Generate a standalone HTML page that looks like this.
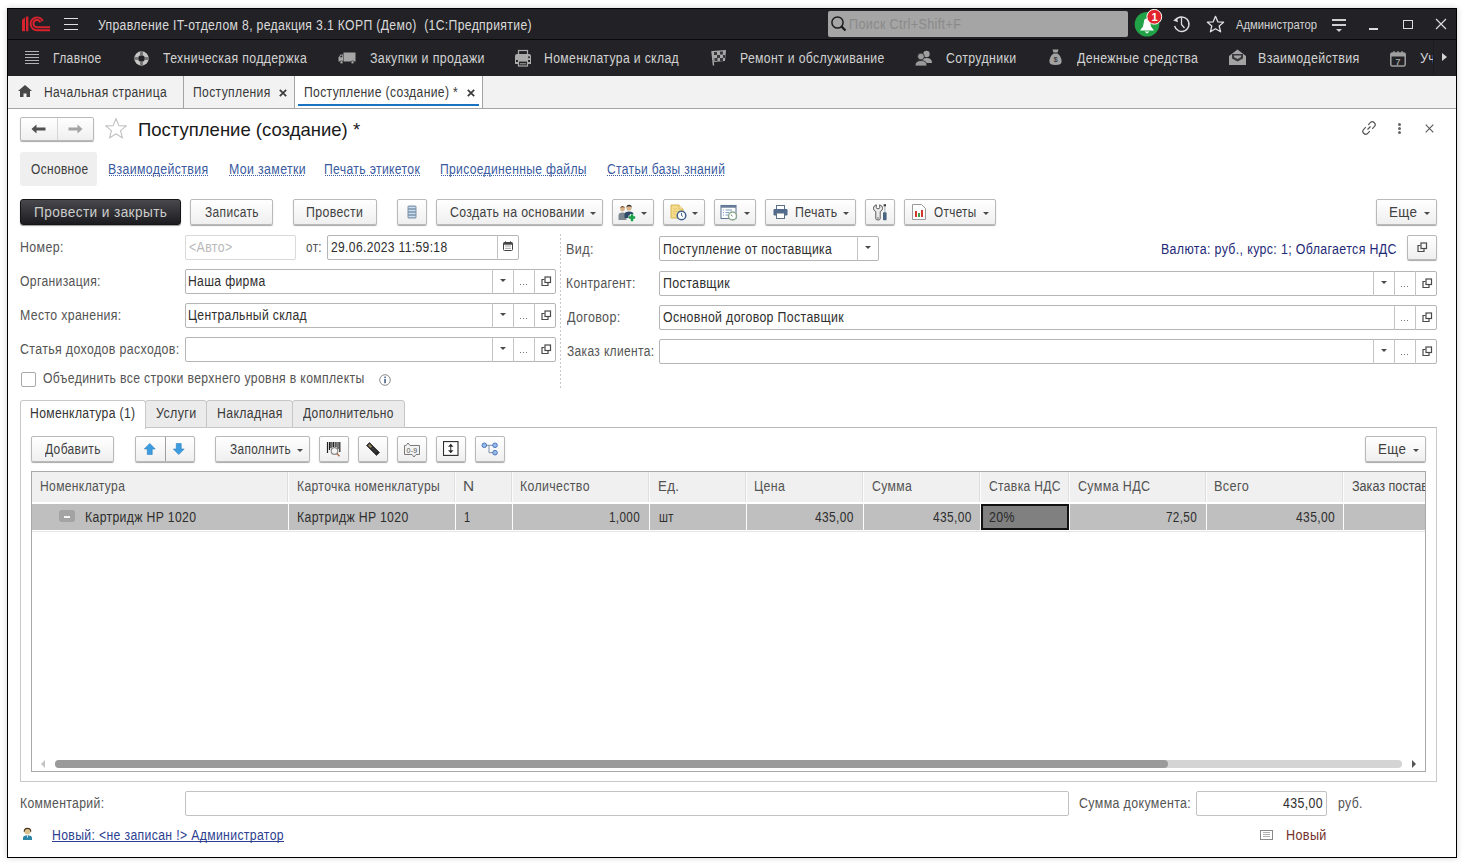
<!DOCTYPE html>
<html><head><meta charset="utf-8">
<style>
*{box-sizing:border-box;margin:0;padding:0}
html,body{width:1464px;height:865px;overflow:hidden;background:#fff;font-family:"Liberation Sans",sans-serif;position:relative}
.a{position:absolute;white-space:nowrap}
.btn{position:absolute;height:26px;border:1px solid #b9b9b9;border-radius:2px;background:linear-gradient(#fff,#efefef);box-shadow:0 1px 1px #a9a9a9}
.inp{position:absolute;height:25px;border:1px solid #b5b5b5;border-radius:2px;background:#fff}
.caret{position:absolute;width:0;height:0;border-left:3px solid transparent;border-right:3px solid transparent;border-top:3px solid #4a4a4a}
.dl{position:absolute;height:1px;background-image:linear-gradient(to right,#3d5ea5 50%,transparent 50%);background-size:2px 1px}
</style></head><body>
<div class="a" style="left:7px;top:8px;width:1450px;height:850px;border:1px solid #000;box-shadow:0 0 6px rgba(0,0,0,.18)"></div>
<div class="a" style="left:8px;top:9px;width:1448px;height:30px;background:#222226"></div>
<div class="a" style="left:8px;top:39px;width:1448px;height:1px;background:#0a0a0b"></div>
<div class="a" style="left:8px;top:40px;width:1448px;height:36px;background:#232327"></div>
<div class="a" style="left:8px;top:76px;width:1448px;height:33px;background:#f2f2f2;border-bottom:1px solid #a5a5a5"></div>
<svg class="a" style="left:16px;top:12px" width="36" height="22" viewBox="0 0 36 22">
 <path d="M6 8 L9 5.3 V19.2 H6 Z M10 4.4 H12.4 V19.2 H10 Z" fill="#d8222e"/>
 <g fill="none" stroke="#d8222e" stroke-width="2">
  <path d="M26.8 9.1 A6.4 6.4 0 1 0 21 18.2 H34"/>
  <path d="M24.4 10.4 A3.6 3.6 0 1 0 21 15.2 H34"/>
 </g></svg>
<div class="a" style="left:64px;top:18px;width:14px;height:1px;background:#e0e0e0"></div>
<div class="a" style="left:64px;top:24px;width:14px;height:1px;background:#e0e0e0"></div>
<div class="a" style="left:64px;top:29px;width:14px;height:1px;background:#e0e0e0"></div>
<div class="a" style="left:98.00px;top:17px;font-size:14px;line-height:16px;color:#dadada;letter-spacing:0.4px;transform:scaleX(0.8708);transform-origin:0 0;">Управление IT-отделом 8, редакция 3.1 КОРП (Демо)&nbsp; (1С:Предприятие)</div>
<div class="a" style="left:828px;top:11px;width:300px;height:26px;background:#a5a5a5;border-radius:2px"></div>
<svg class="a" style="left:830px;top:15px" width="18" height="18" viewBox="0 0 18 18"><circle cx="7.5" cy="7.5" r="5.6" fill="none" stroke="#1d1d1d" stroke-width="1.5"/><path d="M11.6 11.6 L15.5 15.5" stroke="#1d1d1d" stroke-width="2.2"/></svg>
<div class="a" style="left:848.60px;top:16px;font-size:14px;line-height:16px;color:#8a8a8a;letter-spacing:0.4px;transform:scaleX(0.9011);transform-origin:0 0;">Поиск Ctrl+Shift+F</div>
<svg class="a" style="left:1133px;top:9px" width="30" height="30" viewBox="0 0 30 30">
 <circle cx="14" cy="15.2" r="12.3" fill="#22a246"/>
 <path d="M7 21.5 L21 21.5 L18 17.5 L17 12.5 A3 3 0 0 0 11 12.5 L10 17.5 Z" fill="#fff"/>
 <path d="M11.5 22.5 H16.5 L14 24.5 Z" fill="#fff"/>
 <circle cx="21.3" cy="7.8" r="7.4" fill="#e3232b" stroke="#fff" stroke-width="1"/>
 <text x="21.5" y="11.8" font-family="Liberation Sans" font-size="11" font-weight="bold" fill="#fff" text-anchor="middle">1</text>
</svg>
<svg class="a" style="left:1171px;top:14px" width="21" height="21" viewBox="0 0 21 21"><path d="M4.6 6.2 A7.3 7.3 0 1 1 3.6 12" fill="none" stroke="#dedede" stroke-width="1.4"/><path d="M2.2 6.5 L7 8.3 L6 3.5 Z" fill="#dedede"/><path d="M10.5 3.5 V10.4 L13.5 14" fill="none" stroke="#dedede" stroke-width="1.3"/></svg>
<svg class="a" style="left:1206px;top:15px" width="19" height="19" viewBox="0 0 19 19"><path d="M9.5 1.3 L11.8 6.8 L17.6 7.2 L13.2 11 L14.6 16.8 L9.5 13.7 L4.4 16.8 L5.8 11 L1.4 7.2 L7.2 6.8 Z" fill="none" stroke="#dedede" stroke-width="1.3" stroke-linejoin="round"/></svg>
<div class="a" style="left:1236.30px;top:18px;font-size:12px;line-height:14px;color:#d2d2d2;transform:scaleX(0.9367);transform-origin:0 0;">Администратор</div>
<div class="a" style="left:1332px;top:19px;width:14px;height:1.5px;background:#d0d0d0"></div>
<div class="a" style="left:1332px;top:24px;width:14px;height:1.5px;background:#d0d0d0"></div>
<div class="a" style="left:1336px;top:29px;width:0;height:0;border-left:3.5px solid transparent;border-right:3.5px solid transparent;border-top:3px solid #d0d0d0"></div>
<div class="a" style="left:1369px;top:28px;width:9px;height:1.5px;background:#dcdcdc"></div>
<div class="a" style="left:1403px;top:20px;width:10px;height:9px;border:1.3px solid #dcdcdc"></div>
<svg class="a" style="left:1435px;top:18px" width="12" height="12" viewBox="0 0 12 12"><path d="M1 1 L11 11 M11 1 L1 11" stroke="#dcdcdc" stroke-width="1.2"/></svg>
<div class="a" style="left:25px;top:51px;width:14px;height:13px;background:repeating-linear-gradient(#b4b4b4 0 1px,transparent 1px 3px)"></div>
<div class="a" style="left:52.94px;top:50px;font-size:14px;line-height:16px;color:#d2d2d2;letter-spacing:0.4px;transform:scaleX(0.8620);transform-origin:0 0;">Главное</div>
<svg class="a" style="left:134px;top:51px" width="15" height="15" viewBox="0 0 15 15"><circle cx="7.5" cy="7.5" r="7.2" fill="#c6c6c6"/><circle cx="7.5" cy="7.5" r="3.3" fill="#232327"/><rect x="6" y="0" width="3" height="4.2" fill="#777"/><rect x="6" y="10.8" width="3" height="4.2" fill="#777"/><rect x="0" y="6" width="4.2" height="3" fill="#777"/><rect x="10.8" y="6" width="4.2" height="3" fill="#777"/></svg>
<div class="a" style="left:163.30px;top:50px;font-size:14px;line-height:16px;color:#d2d2d2;letter-spacing:0.4px;transform:scaleX(0.8769);transform-origin:0 0;">Техническая поддержка</div>
<svg class="a" style="left:338px;top:52px" width="18" height="12" viewBox="0 0 18 12"><path d="M5.5 0.5 H17.5 V9.5 H5.5 Z" fill="#a6a6a6"/><path d="M5 2.5 H2.5 L0.5 5.5 V9.5 H5 Z" fill="#a6a6a6"/><path d="M1.8 5.2 L3 3.5 H4.2 V5.2 Z" fill="#232327"/><circle cx="3.5" cy="10.2" r="1.5" fill="#a6a6a6" stroke="#232327" stroke-width="0.6"/><circle cx="14.5" cy="10.2" r="1.5" fill="#a6a6a6" stroke="#232327" stroke-width="0.6"/></svg>
<div class="a" style="left:369.50px;top:50px;font-size:14px;line-height:16px;color:#d2d2d2;letter-spacing:0.4px;transform:scaleX(0.8876);transform-origin:0 0;">Закупки и продажи</div>
<svg class="a" style="left:514px;top:49px" width="18" height="18" viewBox="0 0 18 18"><rect x="4.5" y="1.5" width="9" height="5" fill="none" stroke="#ababab" stroke-width="1.2"/><path d="M1 7 Q1 5 3 5 H15 Q17 5 17 7 V15 H1 Z" fill="#ababab"/><rect x="2" y="11" width="2" height="2" fill="#232327"/><rect x="14" y="11" width="2" height="2" fill="#232327"/><circle cx="15" cy="8.3" r="1" fill="#232327"/><rect x="4.5" y="12" width="9" height="5" fill="#232327" stroke="#ababab" stroke-width="1.2"/><path d="M6 14.8 H12" stroke="#ababab" stroke-width="1"/></svg>
<div class="a" style="left:544.43px;top:50px;font-size:14px;line-height:16px;color:#d2d2d2;letter-spacing:0.4px;transform:scaleX(0.8710);transform-origin:0 0;">Номенклатура и склад</div>
<svg class="a" style="left:711px;top:49px" width="16" height="17" viewBox="0 0 16 17"><path d="M1 2 L15 1 L14 12 L3 13 Z" fill="#a8a8a8"/><path d="M3 3 h3 v3 h-3z M9 2.5 h3 v3 h-3z M6 6 h3 v3 h-3z M3.5 9 h3 v3 h-3z M12 6 h2 v3 h-2z M9 9 h3 v3 h-3z" fill="#3a3a3e"/><path d="M1 2 L2.5 16.5" stroke="#a8a8a8" stroke-width="1.5"/></svg>
<div class="a" style="left:740.13px;top:50px;font-size:14px;line-height:16px;color:#d2d2d2;letter-spacing:0.4px;transform:scaleX(0.8727);transform-origin:0 0;">Ремонт и обслуживание</div>
<svg class="a" style="left:915px;top:50px" width="17" height="16" viewBox="0 0 17 16"><circle cx="11.5" cy="4" r="3.2" fill="#a0a0a0"/><path d="M6 13 Q6 8 11.5 8 Q17 8 17 13 Z" fill="#a0a0a0"/><circle cx="6" cy="6.5" r="3.4" fill="#9a9a9a" stroke="#232327" stroke-width="0.8"/><path d="M0 16 Q0 10.5 6 10.5 Q12 10.5 12 16 Z" fill="#9a9a9a" stroke="#232327" stroke-width="0.8"/></svg>
<div class="a" style="left:946.00px;top:50px;font-size:14px;line-height:16px;color:#d2d2d2;letter-spacing:0.4px;transform:scaleX(0.8828);transform-origin:0 0;">Сотрудники</div>
<svg class="a" style="left:1049px;top:49px" width="13" height="16" viewBox="0 0 13 16"><path d="M3.5 0.5 H9.5 L8.5 3.5 H4.5 Z" fill="#a3a3a3"/><path d="M4.5 4.5 H8.5 Q13 8 12.5 13 Q12.5 16 6.5 16 Q0.5 16 0.5 13 Q0 8 4.5 4.5 Z" fill="#a3a3a3"/><text x="6.5" y="13.3" font-size="7.5" fill="#232327" text-anchor="middle" font-family="Liberation Sans">$</text></svg>
<div class="a" style="left:1076.50px;top:50px;font-size:14px;line-height:16px;color:#d2d2d2;letter-spacing:0.4px;transform:scaleX(0.8833);transform-origin:0 0;">Денежные средства</div>
<svg class="a" style="left:1229px;top:49px" width="17" height="16" viewBox="0 0 17 16"><path d="M0 7 L8.5 0.5 L17 7 V16 H0 Z" fill="#a3a3a3"/><path d="M3 5 H14 V9.5 L8.5 12.5 L3 9.5 Z" fill="#3b3b3f"/><path d="M5 6.5 H12 V8 L8.5 10 L5 8 Z" fill="#a3a3a3"/></svg>
<div class="a" style="left:1257.81px;top:50px;font-size:14px;line-height:16px;color:#d2d2d2;letter-spacing:0.4px;transform:scaleX(0.8902);transform-origin:0 0;">Взаимодействия</div>
<svg class="a" style="left:1390px;top:50px" width="16" height="17" viewBox="0 0 16 17"><rect x="0.8" y="3" width="14.4" height="13" rx="1.5" fill="none" stroke="#a0a0a0" stroke-width="1.5"/><rect x="0.8" y="3" width="14.4" height="3.5" fill="#a0a0a0"/><path d="M4 1 V4 M8 1 V4 M12 1 V4" stroke="#a0a0a0" stroke-width="1.2"/><text x="8" y="14.8" font-size="9" font-weight="bold" fill="#a0a0a0" text-anchor="middle" font-family="Liberation Sans">7</text></svg>
<div class="a" style="left:1420px;top:40px;width:13px;height:36px;overflow:hidden"><div class="a" style="left:0;top:10px;font-size:14px;line-height:16px;color:#d2d2d2;transform:scaleX(0.92);transform-origin:0 0">Учет</div></div>
<div class="a" style="left:1433px;top:40px;width:1px;height:36px;background:#1d1d20"></div>
<div class="a" style="left:1442px;top:53px;width:0;height:0;border-top:4.5px solid transparent;border-bottom:4.5px solid transparent;border-left:5.5px solid #d4d4d4"></div>
<svg class="a" style="left:18px;top:85px" width="14" height="12" viewBox="0 0 14 12"><path d="M7 0 L14 6 H12 V12 H8.5 V8.5 H5.5 V12 H2 V6 H0 Z" fill="#474747"/></svg>
<div class="a" style="left:43.54px;top:84px;font-size:14px;line-height:16px;color:#383838;letter-spacing:0.4px;transform:scaleX(0.8623);transform-origin:0 0;">Начальная страница</div>
<div class="a" style="left:183px;top:76px;width:1px;height:32px;background:#a3a3a3"></div>
<div class="a" style="left:193.43px;top:84px;font-size:14px;line-height:16px;color:#383838;letter-spacing:0.4px;transform:scaleX(0.8674);transform-origin:0 0;">Поступления</div>
<svg class="a" style="left:279px;top:89px" width="8" height="8" viewBox="0 0 8 8"><path d="M0.8 0.8 L7.2 7.2 M7.2 0.8 L0.8 7.2" stroke="#3a3a3a" stroke-width="1.7"/></svg>
<div class="a" style="left:294px;top:76px;width:1px;height:32px;background:#a3a3a3"></div>
<div class="a" style="left:295px;top:76px;width:187px;height:32px;background:#fff"></div>
<div class="a" style="left:304.13px;top:84px;font-size:14px;line-height:16px;color:#383838;letter-spacing:0.4px;transform:scaleX(0.8677);transform-origin:0 0;">Поступление (создание) *</div>
<svg class="a" style="left:467px;top:89px" width="8" height="8" viewBox="0 0 8 8"><path d="M0.8 0.8 L7.2 7.2 M7.2 0.8 L0.8 7.2" stroke="#3a3a3a" stroke-width="1.7"/></svg>
<div class="a" style="left:298px;top:104px;width:181px;height:2px;background:#1a73c0"></div>
<div class="a" style="left:482px;top:76px;width:1px;height:32px;background:#a3a3a3"></div>
<div class="btn" style="left:20px;top:117px;width:74px;height:24px"></div>
<div class="a" style="left:57px;top:118px;width:1px;height:22px;background:#d5d5d5"></div>
<svg class="a" style="left:31px;top:124px" width="16" height="10" viewBox="0 0 16 10"><path d="M0.5 5 L5.5 0.5 V3.5 H14.5 V6.5 H5.5 V9.5 Z" fill="#505050"/></svg>
<svg class="a" style="left:67px;top:124px" width="16" height="10" viewBox="0 0 16 10"><path d="M15.5 5 L10.5 0.5 V3.5 H1.5 V6.5 H10.5 V9.5 Z" fill="#a3a3a3"/></svg>
<svg class="a" style="left:104px;top:117px" width="24" height="23" viewBox="0 0 24 23"><path d="M12 1.5 L14.8 8.6 L22.4 8.9 L16.5 13.6 L18.5 21 L12 16.8 L5.5 21 L7.5 13.6 L1.6 8.9 L9.2 8.6 Z" fill="none" stroke="#c2c2c2" stroke-width="1.1" stroke-linejoin="round"/></svg>
<div class="a" style="left:137.63px;top:119px;font-size:19px;line-height:22px;color:#1a1a1a;transform:scaleX(0.9739);transform-origin:0 0;">Поступление (создание) *</div>
<svg class="a" style="left:1361px;top:120px" width="16" height="16" viewBox="0 0 16 16"><path d="M6.5 9.5 L9.5 6.5" stroke="#555" stroke-width="1.2"/><path d="M7.2 4.8 L9.3 2.7 A2.6 2.6 0 0 1 13.3 6.7 L11.2 8.8 M4.8 7.2 L2.7 9.3 A2.6 2.6 0 0 0 6.7 13.3 L8.8 11.2" fill="none" stroke="#555" stroke-width="1.2"/></svg>
<div class="a" style="left:1398px;top:123px;width:3px;height:3px;border-radius:2px;background:#666"></div>
<div class="a" style="left:1398px;top:127px;width:3px;height:3px;border-radius:2px;background:#666"></div>
<div class="a" style="left:1398px;top:131px;width:3px;height:3px;border-radius:2px;background:#666"></div>
<svg class="a" style="left:1425px;top:124px" width="9" height="9" viewBox="0 0 9 9"><path d="M0.7 0.7 L8.3 8.3 M8.3 0.7 L0.7 8.3" stroke="#555" stroke-width="1.1"/></svg>
<div class="a" style="left:20px;top:152px;width:77px;height:34px;background:#efefef;border-radius:3px"></div>
<div class="a" style="left:30.70px;top:161px;font-size:14px;line-height:16px;color:#3c3c3c;letter-spacing:0.4px;transform:scaleX(0.8546);transform-origin:0 0;">Основное</div>
<div class="a" style="left:108.42px;top:161px;font-size:14px;line-height:16px;color:#3a5aa0;letter-spacing:0.4px;transform:scaleX(0.8804);transform-origin:0 0;">Взаимодействия</div>
<div class="dl" style="left:109px;top:175px;width:99px"></div>
<div class="a" style="left:228.52px;top:161px;font-size:14px;line-height:16px;color:#3a5aa0;letter-spacing:0.4px;transform:scaleX(0.8823);transform-origin:0 0;">Мои заметки</div>
<div class="dl" style="left:229px;top:175px;width:75px"></div>
<div class="a" style="left:324.43px;top:161px;font-size:14px;line-height:16px;color:#3a5aa0;letter-spacing:0.4px;transform:scaleX(0.8695);transform-origin:0 0;">Печать этикеток</div>
<div class="dl" style="left:325px;top:175px;width:96px"></div>
<div class="a" style="left:440.14px;top:161px;font-size:14px;line-height:16px;color:#3a5aa0;letter-spacing:0.4px;transform:scaleX(0.8631);transform-origin:0 0;">Присоединенные файлы</div>
<div class="dl" style="left:441px;top:175px;width:146px"></div>
<div class="a" style="left:607.00px;top:161px;font-size:14px;line-height:16px;color:#3a5aa0;letter-spacing:0.4px;transform:scaleX(0.8602);transform-origin:0 0;">Статьи базы знаний</div>
<div class="dl" style="left:607px;top:175px;width:118px"></div>
<div class="a" style="left:20px;top:199px;width:161px;height:26px;border-radius:3px;background:linear-gradient(#48484d,#1c1c20);border:1px solid #151517;box-shadow:0 1px 1px #999"></div>
<div class="a" style="left:33.72px;top:204px;font-size:14px;line-height:16px;color:#cdcdcd;letter-spacing:0.4px;transform:scaleX(0.9761);transform-origin:0 0;">Провести и закрыть</div>
<div class="btn" style="left:190px;top:199px;width:83px"></div>
<div class="a" style="left:204.90px;top:204px;font-size:14px;line-height:16px;color:#404040;letter-spacing:0.4px;transform:scaleX(0.8551);transform-origin:0 0;">Записать</div>
<div class="btn" style="left:293px;top:199px;width:84px"></div>
<div class="a" style="left:306.12px;top:204px;font-size:14px;line-height:16px;color:#404040;letter-spacing:0.4px;transform:scaleX(0.8806);transform-origin:0 0;">Провести</div>
<div class="btn" style="left:397px;top:199px;width:30px"></div>
<svg class="a" style="left:407px;top:205px" width="10" height="14" viewBox="0 0 10 14"><rect x="0.5" y="0.5" width="9" height="13" rx="1.5" fill="#7e93a8"/><path d="M1.5 2.5 H8.5 M1.5 5.5 H8.5 M1.5 8.5 H8.5 M1.5 11.5 H8.5" stroke="#c8def2" stroke-width="1.4"/></svg>
<div class="btn" style="left:436px;top:199px;width:167px"></div>
<div class="a" style="left:450.30px;top:204px;font-size:14px;line-height:16px;color:#404040;letter-spacing:0.4px;transform:scaleX(0.8795);transform-origin:0 0;">Создать на основании</div>
<div class="caret" style="left:590px;top:212px"></div>
<div class="btn" style="left:612px;top:199px;width:42px"></div>
<svg class="a" style="left:618px;top:204px" width="18" height="18" viewBox="0 0 18 18"><circle cx="4.5" cy="5" r="2.4" fill="#d9b48a"/><path d="M2 4.5 Q2.5 1.8 4.5 2 Q6.8 2 7 4.5 Q6 3.2 4.5 3.3 Q3 3.3 2 4.5Z" fill="#6b4a2a"/><path d="M0.5 16 V11.5 Q0.5 8.5 4.5 8.5 Q8.5 8.5 8.5 11.5 V16 Z" fill="#7d8790"/><circle cx="11" cy="4" r="2.6" fill="#d9b48a"/><path d="M8.3 3.6 Q8.6 0.8 11 0.8 Q13.6 0.8 13.8 3.6 Q12.5 2.2 11 2.3 Q9.5 2.3 8.3 3.6Z" fill="#2c2c2c"/><path d="M6.5 14 V10.5 Q6.5 7.5 11 7.5 Q15.5 7.5 15.5 10.5 V14 Z" fill="#2f4a66"/><path d="M10.5 13.5 H17.5 M14 10 V17.5" stroke="#fff" stroke-width="4.2"/><path d="M10.8 13.5 H17.2 M14 10.3 V17.2" stroke="#17a046" stroke-width="2.6"/></svg>
<div class="caret" style="left:641px;top:212px"></div>
<div class="btn" style="left:663px;top:199px;width:42px"></div>
<svg class="a" style="left:670px;top:204px" width="17" height="17" viewBox="0 0 17 17"><path d="M1 1 H9 L13 5 V14 H1 Z" fill="#f6dc8a" stroke="#d7b454" stroke-width="1"/><path d="M9 1 V5 H13" fill="#fbeab8" stroke="#d7b454" stroke-width="0.8"/><path d="M3 5 H7 M3 7.5 H8 M3 10 H6" stroke="#e0c070" stroke-width="0.8"/><circle cx="11.5" cy="11.5" r="4.3" fill="#fff" stroke="#41618f" stroke-width="1.5"/><path d="M11.5 9 V11.5 L13 12.5" fill="none" stroke="#41618f" stroke-width="1"/></svg>
<div class="caret" style="left:692px;top:212px"></div>
<div class="btn" style="left:714px;top:199px;width:42px"></div>
<svg class="a" style="left:720px;top:204px" width="18" height="17" viewBox="0 0 18 17"><rect x="1" y="1.5" width="15" height="13" fill="#fff" stroke="#647a96" stroke-width="1.1"/><rect x="1" y="1.5" width="15" height="2.2" fill="#647a96"/><path d="M3 6 h1 M3 8.5 h1 M3 11 h1 M5.5 6 H12 M5.5 8.5 H9 M5.5 11 H8" stroke="#7a9cc8" stroke-width="1"/><circle cx="12.5" cy="12" r="4" fill="#fff" stroke="#8aa68e" stroke-width="1.4"/><path d="M10.8 10.5 L12.5 12.2" stroke="#557a5b" stroke-width="1"/></svg>
<div class="caret" style="left:744px;top:212px"></div>
<div class="btn" style="left:765px;top:199px;width:91px"></div>
<svg class="a" style="left:773px;top:205px" width="15" height="14" viewBox="0 0 15 14"><rect x="3.5" y="0.5" width="8" height="4" fill="#fff" stroke="#5c6f84" stroke-width="1"/><rect x="0.5" y="4" width="14" height="6.5" rx="1.2" fill="#4f6a8a"/><rect x="3.5" y="8" width="8" height="5.5" fill="#fff" stroke="#5c6f84" stroke-width="1"/></svg>
<div class="a" style="left:794.52px;top:204px;font-size:14px;line-height:16px;color:#404040;letter-spacing:0.4px;transform:scaleX(0.8826);transform-origin:0 0;">Печать</div>
<div class="caret" style="left:843px;top:212px"></div>
<div class="btn" style="left:865px;top:199px;width:30px"></div>
<svg class="a" style="left:873px;top:204px" width="15" height="17" viewBox="0 0 15 17"><path d="M3.3 0.8 V3.6 Q3.3 4.8 5 4.8 Q6.7 4.8 6.7 3.6 V0.8 Q9.6 1.8 9.6 4.2 Q9.6 6.6 7.2 7.6 V14.8 Q7.2 16 5 16 Q2.8 16 2.8 14.8 V7.6 Q0.4 6.6 0.4 4.2 Q0.4 1.8 3.3 0.8 Z" fill="#ececec" stroke="#5c5c5c" stroke-width="1"/><path d="M4.2 14 H5.8" stroke="#555" stroke-width="1"/><rect x="10.6" y="0.3" width="2.4" height="2.2" fill="#333"/><rect x="11" y="2.4" width="1.6" height="6" fill="#c2c8ce"/><rect x="10" y="8.2" width="3.6" height="8" rx="0.8" fill="#4a6580"/></svg>
<div class="btn" style="left:904px;top:199px;width:92px"></div>
<svg class="a" style="left:912px;top:204px" width="14" height="16" viewBox="0 0 14 16"><path d="M0.5 0.5 H9.5 L13.5 4.5 V15.5 H0.5 Z" fill="#fff" stroke="#9a9a9a" stroke-width="1"/><rect x="3" y="7" width="2" height="6" fill="#d0392b"/><rect x="6" y="9" width="2" height="4" fill="#3fa24a"/><rect x="9" y="6" width="2" height="7" fill="#d0392b"/></svg>
<div class="a" style="left:934.40px;top:204px;font-size:14px;line-height:16px;color:#404040;letter-spacing:0.4px;transform:scaleX(0.8385);transform-origin:0 0;">Отчеты</div>
<div class="caret" style="left:983px;top:212px"></div>
<div class="btn" style="left:1376px;top:199px;width:61px"></div>
<div class="a" style="left:1389.44px;top:204px;font-size:14px;line-height:16px;color:#404040;letter-spacing:0.4px;transform:scaleX(0.9579);transform-origin:0 0;">Еще</div>
<div class="caret" style="left:1424px;top:212px"></div>
<div class="a" style="left:19.81px;top:239px;font-size:14px;line-height:16px;color:#545454;letter-spacing:0.4px;transform:scaleX(0.8855);transform-origin:0 0;">Номер:</div>
<div class="inp" style="left:185px;top:235px;width:111px;height:25px;border-color:#d9d9d9"></div>
<div class="a" style="left:188.60px;top:239px;font-size:14px;line-height:16px;color:#b9b9b9;letter-spacing:0.4px;transform:scaleX(0.8832);transform-origin:0 0;">&lt;Авто&gt;</div>
<div class="a" style="left:306.20px;top:239px;font-size:14px;line-height:16px;color:#545454;letter-spacing:0.4px;transform:scaleX(0.8423);transform-origin:0 0;">от:</div>
<div class="inp" style="left:327px;top:235px;width:192px;height:25px"></div>
<div class="a" style="left:331.10px;top:239px;font-size:14px;line-height:16px;color:#2e2e2e;letter-spacing:0.4px;transform:scaleX(0.8626);transform-origin:0 0;">29.06.2023 11:59:18</div>
<div class="a" style="left:497px;top:235px;width:1px;height:25px;background:#c4c4c4"></div>
<svg class="a" style="left:503px;top:241px" width="10" height="10" viewBox="0 0 10 10"><rect x="0.5" y="1.5" width="9" height="8" rx="1" fill="none" stroke="#444" stroke-width="1"/><rect x="0.5" y="1.5" width="9" height="2.2" fill="#444"/><path d="M2.5 0.3 V2 M7.5 0.3 V2" stroke="#444" stroke-width="1"/><path d="M2.5 5 h1 M4.5 5 h1 M6.5 5 h1 M2.5 7.3 h1 M4.5 7.3 h1 M6.5 7.3 h1" stroke="#444" stroke-width="1"/></svg>
<div class="a" style="left:20.40px;top:273px;font-size:14px;line-height:16px;color:#545454;letter-spacing:0.4px;transform:scaleX(0.8678);transform-origin:0 0;">Организация:</div>
<div class="inp" style="left:185px;top:269px;width:371px;height:25px;border-color:#b5b5b5"></div>
<div class="a" style="left:534px;top:269px;width:1px;height:25px;background:#c4c4c4"></div>
<svg class="a" style="left:541px;top:276px" width="11" height="11" viewBox="0 0 11 11"><path d="M3.5 3.5 H1 V9.5 H7 V7" fill="none" stroke="#4a4a4a" stroke-width="1.2"/><rect x="4" y="1" width="5.5" height="5.5" fill="none" stroke="#4a4a4a" stroke-width="1.2"/></svg>
<div class="a" style="left:513px;top:269px;width:1px;height:25px;background:#c4c4c4"></div>
<div class="a" style="left:520px;top:284px;width:8px;height:1px;background:repeating-linear-gradient(90deg,#777 0 1.5px,transparent 1.5px 3px)"></div>
<div class="a" style="left:492px;top:269px;width:1px;height:25px;background:#c4c4c4"></div>
<div class="caret" style="left:500px;top:279px"></div>
<div class="a" style="left:188.33px;top:273px;font-size:14px;line-height:16px;color:#2e2e2e;letter-spacing:0.4px;transform:scaleX(0.8678);transform-origin:0 0;">Наша фирма</div>
<div class="a" style="left:19.52px;top:307px;font-size:14px;line-height:16px;color:#545454;letter-spacing:0.4px;transform:scaleX(0.8786);transform-origin:0 0;">Место хранения:</div>
<div class="inp" style="left:185px;top:303px;width:371px;height:25px;border-color:#b5b5b5"></div>
<div class="a" style="left:534px;top:303px;width:1px;height:25px;background:#c4c4c4"></div>
<svg class="a" style="left:541px;top:310px" width="11" height="11" viewBox="0 0 11 11"><path d="M3.5 3.5 H1 V9.5 H7 V7" fill="none" stroke="#4a4a4a" stroke-width="1.2"/><rect x="4" y="1" width="5.5" height="5.5" fill="none" stroke="#4a4a4a" stroke-width="1.2"/></svg>
<div class="a" style="left:513px;top:303px;width:1px;height:25px;background:#c4c4c4"></div>
<div class="a" style="left:520px;top:318px;width:8px;height:1px;background:repeating-linear-gradient(90deg,#777 0 1.5px,transparent 1.5px 3px)"></div>
<div class="a" style="left:492px;top:303px;width:1px;height:25px;background:#c4c4c4"></div>
<div class="caret" style="left:500px;top:313px"></div>
<div class="a" style="left:188.33px;top:307px;font-size:14px;line-height:16px;color:#2e2e2e;letter-spacing:0.4px;transform:scaleX(0.8681);transform-origin:0 0;">Центральный склад</div>
<div class="a" style="left:20.40px;top:341px;font-size:14px;line-height:16px;color:#545454;letter-spacing:0.4px;transform:scaleX(0.8848);transform-origin:0 0;">Статья доходов расходов:</div>
<div class="inp" style="left:185px;top:337px;width:371px;height:25px;border-color:#b5b5b5"></div>
<div class="a" style="left:534px;top:337px;width:1px;height:25px;background:#c4c4c4"></div>
<svg class="a" style="left:541px;top:344px" width="11" height="11" viewBox="0 0 11 11"><path d="M3.5 3.5 H1 V9.5 H7 V7" fill="none" stroke="#4a4a4a" stroke-width="1.2"/><rect x="4" y="1" width="5.5" height="5.5" fill="none" stroke="#4a4a4a" stroke-width="1.2"/></svg>
<div class="a" style="left:513px;top:337px;width:1px;height:25px;background:#c4c4c4"></div>
<div class="a" style="left:520px;top:352px;width:8px;height:1px;background:repeating-linear-gradient(90deg,#777 0 1.5px,transparent 1.5px 3px)"></div>
<div class="a" style="left:492px;top:337px;width:1px;height:25px;background:#c4c4c4"></div>
<div class="caret" style="left:500px;top:347px"></div>
<div class="a" style="left:21px;top:372px;width:15px;height:15px;border:1px solid #a9a9a9;border-radius:2px;background:#fff"></div>
<div class="a" style="left:42.70px;top:370px;font-size:14px;line-height:16px;color:#545454;letter-spacing:0.4px;transform:scaleX(0.8734);transform-origin:0 0;">Объединить все строки верхнего уровня в комплекты</div>
<svg class="a" style="left:379px;top:374px" width="12" height="12" viewBox="0 0 12 12"><circle cx="6" cy="6" r="5.3" fill="#fff" stroke="#8a8a8a" stroke-width="1"/><rect x="5.2" y="5" width="1.7" height="4.2" fill="#4d6a8a"/><rect x="5.2" y="2.6" width="1.7" height="1.5" fill="#4d6a8a"/></svg>
<div class="a" style="left:560px;top:234px;width:1px;height:156px;background:repeating-linear-gradient(#c8c8c8 0 2px,transparent 2px 4px)"></div>
<div class="a" style="left:565.70px;top:241px;font-size:14px;line-height:16px;color:#545454;letter-spacing:0.4px;transform:scaleX(0.9009);transform-origin:0 0;">Вид:</div>
<div class="inp" style="left:659px;top:236px;width:220px;height:25px;border-color:#b5b5b5"></div>
<div class="a" style="left:857px;top:236px;width:1px;height:25px;background:#c4c4c4"></div>
<div class="caret" style="left:865px;top:246px"></div>
<div class="a" style="left:662.53px;top:241px;font-size:14px;line-height:16px;color:#2e2e2e;letter-spacing:0.4px;transform:scaleX(0.8702);transform-origin:0 0;">Поступление от поставщика</div>
<div class="a" style="left:1161.11px;top:241px;font-size:14px;line-height:16px;color:#1f2a78;letter-spacing:0.4px;transform:scaleX(0.8853);transform-origin:0 0;">Валюта: руб., курс: 1; Облагается НДС</div>
<div class="btn" style="left:1407px;top:235px;width:30px;height:25px"></div>
<svg class="a" style="left:1417px;top:242px" width="11" height="11" viewBox="0 0 11 11"><path d="M3.5 3.5 H1 V9.5 H7 V7" fill="none" stroke="#4a4a4a" stroke-width="1.2"/><rect x="4" y="1" width="5.5" height="5.5" fill="none" stroke="#4a4a4a" stroke-width="1.2"/></svg>
<div class="a" style="left:565.74px;top:275px;font-size:14px;line-height:16px;color:#545454;letter-spacing:0.4px;transform:scaleX(0.8637);transform-origin:0 0;">Контрагент:</div>
<div class="inp" style="left:659px;top:271px;width:778px;height:25px;border-color:#b5b5b5"></div>
<div class="a" style="left:1415px;top:271px;width:1px;height:25px;background:#c4c4c4"></div>
<svg class="a" style="left:1422px;top:278px" width="11" height="11" viewBox="0 0 11 11"><path d="M3.5 3.5 H1 V9.5 H7 V7" fill="none" stroke="#4a4a4a" stroke-width="1.2"/><rect x="4" y="1" width="5.5" height="5.5" fill="none" stroke="#4a4a4a" stroke-width="1.2"/></svg>
<div class="a" style="left:1394px;top:271px;width:1px;height:25px;background:#c4c4c4"></div>
<div class="a" style="left:1401px;top:286px;width:8px;height:1px;background:repeating-linear-gradient(90deg,#777 0 1.5px,transparent 1.5px 3px)"></div>
<div class="a" style="left:1373px;top:271px;width:1px;height:25px;background:#c4c4c4"></div>
<div class="caret" style="left:1381px;top:281px"></div>
<div class="a" style="left:662.51px;top:275px;font-size:14px;line-height:16px;color:#2e2e2e;letter-spacing:0.4px;transform:scaleX(0.8896);transform-origin:0 0;">Поставщик</div>
<div class="a" style="left:566.60px;top:309px;font-size:14px;line-height:16px;color:#545454;letter-spacing:0.4px;transform:scaleX(0.8932);transform-origin:0 0;">Договор:</div>
<div class="inp" style="left:659px;top:305px;width:778px;height:25px;border-color:#b5b5b5"></div>
<div class="a" style="left:1415px;top:305px;width:1px;height:25px;background:#c4c4c4"></div>
<svg class="a" style="left:1422px;top:312px" width="11" height="11" viewBox="0 0 11 11"><path d="M3.5 3.5 H1 V9.5 H7 V7" fill="none" stroke="#4a4a4a" stroke-width="1.2"/><rect x="4" y="1" width="5.5" height="5.5" fill="none" stroke="#4a4a4a" stroke-width="1.2"/></svg>
<div class="a" style="left:1394px;top:305px;width:1px;height:25px;background:#c4c4c4"></div>
<div class="a" style="left:1401px;top:320px;width:8px;height:1px;background:repeating-linear-gradient(90deg,#777 0 1.5px,transparent 1.5px 3px)"></div>
<div class="a" style="left:663.40px;top:309px;font-size:14px;line-height:16px;color:#2e2e2e;letter-spacing:0.4px;transform:scaleX(0.8805);transform-origin:0 0;">Основной договор Поставщик</div>
<div class="a" style="left:566.60px;top:343px;font-size:14px;line-height:16px;color:#545454;letter-spacing:0.4px;transform:scaleX(0.8575);transform-origin:0 0;">Заказ клиента:</div>
<div class="inp" style="left:659px;top:339px;width:778px;height:25px;border-color:#b5b5b5"></div>
<div class="a" style="left:1415px;top:339px;width:1px;height:25px;background:#c4c4c4"></div>
<svg class="a" style="left:1422px;top:346px" width="11" height="11" viewBox="0 0 11 11"><path d="M3.5 3.5 H1 V9.5 H7 V7" fill="none" stroke="#4a4a4a" stroke-width="1.2"/><rect x="4" y="1" width="5.5" height="5.5" fill="none" stroke="#4a4a4a" stroke-width="1.2"/></svg>
<div class="a" style="left:1394px;top:339px;width:1px;height:25px;background:#c4c4c4"></div>
<div class="a" style="left:1401px;top:354px;width:8px;height:1px;background:repeating-linear-gradient(90deg,#777 0 1.5px,transparent 1.5px 3px)"></div>
<div class="a" style="left:1373px;top:339px;width:1px;height:25px;background:#c4c4c4"></div>
<div class="caret" style="left:1381px;top:349px"></div>
<div class="a" style="left:20px;top:427px;width:1417px;height:355px;border:1px solid #c9c9c9;border-top-color:#b8b8b8"></div>
<div class="a" style="left:145px;top:400px;width:62px;height:28px;background:#ebebeb;border:1px solid #c6c6c6;border-radius:3px 3px 0 0"></div>
<div class="a" style="left:206px;top:400px;width:87px;height:28px;background:#ebebeb;border:1px solid #c6c6c6;border-radius:3px 3px 0 0"></div>
<div class="a" style="left:292px;top:400px;width:113px;height:28px;background:#ebebeb;border:1px solid #c6c6c6;border-radius:3px 3px 0 0"></div>
<div class="a" style="left:20px;top:400px;width:126px;height:29px;background:#fff;border:1px solid #c9c9c9;border-bottom:none;border-radius:3px 3px 0 0"></div>
<div class="a" style="left:30.33px;top:405px;font-size:14px;line-height:16px;color:#333;letter-spacing:0.4px;transform:scaleX(0.8685);transform-origin:0 0;">Номенклатура (1)</div>
<div class="a" style="left:156.00px;top:405px;font-size:14px;line-height:16px;color:#3a3a3a;letter-spacing:0.4px;transform:scaleX(0.8907);transform-origin:0 0;">Услуги</div>
<div class="a" style="left:216.62px;top:405px;font-size:14px;line-height:16px;color:#3a3a3a;letter-spacing:0.4px;transform:scaleX(0.8765);transform-origin:0 0;">Накладная</div>
<div class="a" style="left:302.70px;top:405px;font-size:14px;line-height:16px;color:#3a3a3a;letter-spacing:0.4px;transform:scaleX(0.8575);transform-origin:0 0;">Дополнительно</div>
<div class="btn" style="left:31px;top:436px;width:83px;height:26px"></div>
<div class="a" style="left:45.20px;top:441px;font-size:14px;line-height:16px;color:#404040;letter-spacing:0.4px;transform:scaleX(0.8574);transform-origin:0 0;">Добавить</div>
<div class="btn" style="left:135px;top:436px;width:60px;height:26px"></div>
<div class="a" style="left:165px;top:437px;width:1px;height:24px;background:#a0a0a0"></div>
<svg class="a" style="left:144px;top:443px" width="12" height="12" viewBox="0 0 12 12"><path d="M5.75 0.4 L11.2 6 H8.2 V11.6 H3.3 V6 H0.3 Z" fill="#3d9be0" stroke="#2a7fc0" stroke-width="0.6" stroke-linejoin="round"/></svg>
<svg class="a" style="left:173px;top:443px" width="12" height="12" viewBox="0 0 12 12"><path d="M5.75 11.6 L11.2 6 H8.2 V0.4 H3.3 V6 H0.3 Z" fill="#3d9be0" stroke="#2a7fc0" stroke-width="0.6" stroke-linejoin="round"/></svg>
<div class="btn" style="left:215px;top:436px;width:95px;height:26px"></div>
<div class="a" style="left:229.50px;top:441px;font-size:14px;line-height:16px;color:#404040;letter-spacing:0.4px;transform:scaleX(0.8446);transform-origin:0 0;">Заполнить</div>
<div class="caret" style="left:297px;top:449px"></div>
<div class="btn" style="left:319px;top:436px;width:30px;height:26px"></div>
<svg class="a" style="left:326px;top:441px" width="16" height="17" viewBox="0 0 16 17"><path d="M1.5 1 V12 M3.5 1 V9 M5 1 V7 M7.5 1 V6 M10 1 V6 M12 1 V8 M13.8 1 V11" stroke="#222" stroke-width="1.2"/><path d="M9 1 V6 M6.2 1 V6" stroke="#222" stroke-width="0.7"/><circle cx="8.5" cy="10" r="3.3" fill="#f4f4f4" stroke="#8a8a8a" stroke-width="1.2"/><path d="M10.8 12.4 L13.5 15.2" stroke="#b07050" stroke-width="1.5"/></svg>
<div class="btn" style="left:358px;top:436px;width:30px;height:26px"></div>
<svg class="a" style="left:365px;top:441px" width="16" height="16" viewBox="0 0 16 16"><path d="M1.5 4.5 L4.5 1.5 L14.5 11.5 L11.5 14.5 Z" fill="#262626" stroke="#111" stroke-width="0.6" stroke-linejoin="round"/><path d="M2.8 4.5 L4.5 2.8 L7.3 5.6 L5.6 7.3 Z" fill="#8a7a5a"/><path d="M7 8.5 L8.5 7 M8.5 10 L10 8.5 M10 11.5 L11.5 10" stroke="#666" stroke-width="0.8"/></svg>
<div class="btn" style="left:397px;top:436px;width:30px;height:26px"></div>
<svg class="a" style="left:403px;top:441px" width="18" height="17" viewBox="0 0 18 17"><path d="M1.5 4.5 H3 L5 2 L7 4.5 H16.5 V13.5 H13 L11 16 L9 13.5 H1.5 Z" fill="#f2f2f2" stroke="#7a7a7a" stroke-width="1"/><text x="9" y="11.6" font-size="7" fill="#555" text-anchor="middle" font-family="Liberation Sans" letter-spacing="0.3">0-9</text></svg>
<div class="btn" style="left:436px;top:436px;width:30px;height:26px"></div>
<svg class="a" style="left:443px;top:441px" width="16" height="16" viewBox="0 0 16 16"><rect x="0.5" y="0.6" width="14.5" height="13.8" fill="#fff" stroke="#2b2b2b" stroke-width="1.1"/><path d="M7.75 3.5 V11.5" stroke="#2b2b2b" stroke-width="1"/><path d="M5 5.8 L7.75 2.8 L10.5 5.8 Z M5 9.2 L7.75 12.2 L10.5 9.2 Z" fill="#2b2b2b"/></svg>
<div class="btn" style="left:475px;top:436px;width:30px;height:26px"></div>
<svg class="a" style="left:481px;top:441px" width="17" height="16" viewBox="0 0 17 16"><path d="M3.5 4.3 H14 M8 4.3 V11.7 H14" fill="none" stroke="#7d8fa8" stroke-width="1"/><circle cx="3.3" cy="4.3" r="2.3" fill="#9ab8e6" stroke="#4a78c0" stroke-width="1"/><circle cx="14" cy="4.3" r="2.3" fill="#9ab8e6" stroke="#4a78c0" stroke-width="1"/><circle cx="14" cy="11.7" r="2.3" fill="#9ab8e6" stroke="#4a78c0" stroke-width="1"/></svg>
<div class="btn" style="left:1365px;top:436px;width:61px;height:26px"></div>
<div class="a" style="left:1378.35px;top:441px;font-size:14px;line-height:16px;color:#404040;letter-spacing:0.4px;transform:scaleX(0.9509);transform-origin:0 0;">Еще</div>
<div class="caret" style="left:1413px;top:449px"></div>
<div class="a" style="left:31px;top:471px;width:1395px;height:301px;border:1px solid #a9a9a9;background:#fff"></div>
<div class="a" style="left:32px;top:472px;width:1393px;height:30px;background:#f0f0f0"></div>
<div class="a" style="left:32px;top:502px;width:1393px;height:2px;background:#fff"></div>
<div class="a" style="left:32px;top:504px;width:1393px;height:26px;background:#bfbfbf"></div>
<div class="a" style="left:32px;top:531px;width:1393px;height:1px;background:#e6e6e6"></div>
<div class="a" style="left:287px;top:472px;width:1px;height:30px;background:#dedede"></div>
<div class="a" style="left:288px;top:472px;width:1px;height:58px;background:#fcfcfc"></div>
<div class="a" style="left:454px;top:472px;width:1px;height:30px;background:#dedede"></div>
<div class="a" style="left:455px;top:472px;width:1px;height:58px;background:#fcfcfc"></div>
<div class="a" style="left:511px;top:472px;width:1px;height:30px;background:#dedede"></div>
<div class="a" style="left:512px;top:472px;width:1px;height:58px;background:#fcfcfc"></div>
<div class="a" style="left:648px;top:472px;width:1px;height:30px;background:#dedede"></div>
<div class="a" style="left:649px;top:472px;width:1px;height:58px;background:#fcfcfc"></div>
<div class="a" style="left:745px;top:472px;width:1px;height:30px;background:#dedede"></div>
<div class="a" style="left:746px;top:472px;width:1px;height:58px;background:#fcfcfc"></div>
<div class="a" style="left:862px;top:472px;width:1px;height:30px;background:#dedede"></div>
<div class="a" style="left:863px;top:472px;width:1px;height:58px;background:#fcfcfc"></div>
<div class="a" style="left:979px;top:472px;width:1px;height:30px;background:#dedede"></div>
<div class="a" style="left:980px;top:472px;width:1px;height:58px;background:#fcfcfc"></div>
<div class="a" style="left:1068px;top:472px;width:1px;height:30px;background:#dedede"></div>
<div class="a" style="left:1069px;top:472px;width:1px;height:58px;background:#fcfcfc"></div>
<div class="a" style="left:1205px;top:472px;width:1px;height:30px;background:#dedede"></div>
<div class="a" style="left:1206px;top:472px;width:1px;height:58px;background:#fcfcfc"></div>
<div class="a" style="left:1342px;top:472px;width:1px;height:30px;background:#dedede"></div>
<div class="a" style="left:1343px;top:472px;width:1px;height:58px;background:#fcfcfc"></div>
<div class="a" style="left:39.74px;top:478px;font-size:14px;line-height:16px;color:#535353;letter-spacing:0.4px;transform:scaleX(0.8630);transform-origin:0 0;">Номенклатура</div>
<div class="a" style="left:296.63px;top:478px;font-size:14px;line-height:16px;color:#535353;letter-spacing:0.4px;transform:scaleX(0.8681);transform-origin:0 0;">Карточка номенклатуры</div>
<div class="a" style="left:462.90px;top:478px;font-size:14px;line-height:16px;color:#535353;letter-spacing:0.4px;transform:scaleX(1.1000);transform-origin:0 0;">N</div>
<div class="a" style="left:520.02px;top:478px;font-size:14px;line-height:16px;color:#535353;letter-spacing:0.4px;transform:scaleX(0.8821);transform-origin:0 0;">Количество</div>
<div class="a" style="left:657.65px;top:478px;font-size:14px;line-height:16px;color:#535353;letter-spacing:0.4px;transform:scaleX(0.9455);transform-origin:0 0;">Ед.</div>
<div class="a" style="left:754.41px;top:478px;font-size:14px;line-height:16px;color:#535353;letter-spacing:0.4px;transform:scaleX(0.8863);transform-origin:0 0;">Цена</div>
<div class="a" style="left:872.20px;top:478px;font-size:14px;line-height:16px;color:#535353;letter-spacing:0.4px;transform:scaleX(0.8733);transform-origin:0 0;">Сумма</div>
<div class="a" style="left:989.20px;top:478px;font-size:14px;line-height:16px;color:#535353;letter-spacing:0.4px;transform:scaleX(0.8626);transform-origin:0 0;">Ставка НДС</div>
<div class="a" style="left:1078.00px;top:478px;font-size:14px;line-height:16px;color:#535353;letter-spacing:0.4px;transform:scaleX(0.8913);transform-origin:0 0;">Сумма НДС</div>
<div class="a" style="left:1214.29px;top:478px;font-size:14px;line-height:16px;color:#535353;letter-spacing:0.4px;transform:scaleX(0.9088);transform-origin:0 0;">Всего</div>
<div class="a" style="left:1344px;top:472px;width:81px;height:30px;overflow:hidden"><div class="a" style="left:8.3px;top:6px;font-size:14px;line-height:16px;color:#4a4a4a;transform:scaleX(0.9);transform-origin:0 0">Заказ поставщику</div></div>
<div class="a" style="left:59px;top:510px;width:16px;height:12px;background:#a3a3a3;border-radius:3px"></div>
<div class="a" style="left:64px;top:516px;width:6px;height:2px;background:#f4f4f4"></div>
<div class="a" style="left:84.63px;top:509px;font-size:14px;line-height:16px;color:#2e2e2e;letter-spacing:0.4px;transform:scaleX(0.8739);transform-origin:0 0;">Картридж HP 1020</div>
<div class="a" style="left:296.62px;top:509px;font-size:14px;line-height:16px;color:#2e2e2e;letter-spacing:0.4px;transform:scaleX(0.8755);transform-origin:0 0;">Картридж HP 1020</div>
<div class="a" style="left:464.31px;top:509px;font-size:14px;line-height:16px;color:#2e2e2e;letter-spacing:0.4px;transform:scaleX(0.7857);transform-origin:0 0;">1</div>
<div class="a" style="left:609.16px;top:509px;font-size:14px;line-height:16px;color:#2e2e2e;letter-spacing:0.4px;transform:scaleX(0.8369);transform-origin:0 0;">1,000</div>
<div class="a" style="left:658.60px;top:509px;font-size:14px;line-height:16px;color:#2e2e2e;letter-spacing:0.4px;transform:scaleX(0.7944);transform-origin:0 0;">шт</div>
<div class="a" style="left:815.40px;top:509px;font-size:14px;line-height:16px;color:#2e2e2e;letter-spacing:0.4px;transform:scaleX(0.8571);transform-origin:0 0;">435,00</div>
<div class="a" style="left:932.80px;top:509px;font-size:14px;line-height:16px;color:#2e2e2e;letter-spacing:0.4px;transform:scaleX(0.8549);transform-origin:0 0;">435,00</div>
<div class="a" style="left:981px;top:504px;width:88px;height:26px;background:#808080;border:2px solid #111"></div>
<div class="a" style="left:989.20px;top:509px;font-size:14px;line-height:16px;color:#2a2a2a;letter-spacing:0.4px;transform:scaleX(0.8847);transform-origin:0 0;">20%</div>
<div class="a" style="left:1166.40px;top:509px;font-size:14px;line-height:16px;color:#2e2e2e;letter-spacing:0.4px;transform:scaleX(0.8386);transform-origin:0 0;">72,50</div>
<div class="a" style="left:1295.60px;top:509px;font-size:14px;line-height:16px;color:#2e2e2e;letter-spacing:0.4px;transform:scaleX(0.8638);transform-origin:0 0;">435,00</div>
<div class="a" style="left:55px;top:760px;width:1347px;height:8px;border-radius:4px;background:#d4d4d4"></div>
<div class="a" style="left:55px;top:760px;width:1113px;height:8px;border-radius:4px;background:#9a9a9a"></div>
<div class="a" style="left:41px;top:760px;width:0;height:0;border-top:4px solid transparent;border-bottom:4px solid transparent;border-right:4px solid #c4c4c4"></div>
<div class="a" style="left:1412px;top:760px;width:0;height:0;border-top:4px solid transparent;border-bottom:4px solid transparent;border-left:4px solid #555"></div>
<div class="a" style="left:19.53px;top:795px;font-size:14px;line-height:16px;color:#545454;letter-spacing:0.4px;transform:scaleX(0.8712);transform-origin:0 0;">Комментарий:</div>
<div class="inp" style="left:185px;top:791px;width:884px;height:25px;border-color:#c2c2c2"></div>
<div class="a" style="left:1079.20px;top:795px;font-size:14px;line-height:16px;color:#545454;letter-spacing:0.4px;transform:scaleX(0.8870);transform-origin:0 0;">Сумма документа:</div>
<div class="inp" style="left:1196px;top:791px;width:131px;height:25px;border-color:#c2c2c2"></div>
<div class="a" style="left:1283.00px;top:795px;font-size:14px;line-height:16px;color:#2e2e2e;letter-spacing:0.4px;transform:scaleX(0.8816);transform-origin:0 0;">435,00</div>
<div class="a" style="left:1337.60px;top:795px;font-size:14px;line-height:16px;color:#545454;letter-spacing:0.4px;transform:scaleX(0.8776);transform-origin:0 0;">руб.</div>
<svg class="a" style="left:22px;top:827px" width="11" height="13" viewBox="0 0 11 13"><circle cx="5.5" cy="4.2" r="3.2" fill="#d9c38e"/><path d="M2.2 4.8 A3.3 3.4 0 0 1 8.8 4.8" fill="none" stroke="#4a3520" stroke-width="1.1"/><path d="M1 13 V10.8 Q1 8.2 5.5 8.2 Q10 8.2 10 10.8 V13 Z" fill="#2e86a6"/><path d="M5.5 8.2 V10.5" stroke="#e8f4f8" stroke-width="0.9"/></svg>
<div class="a" style="left:51.53px;top:827px;font-size:14px;line-height:16px;color:#2d3f91;letter-spacing:0.4px;transform:scaleX(0.8734);transform-origin:0 0;">Новый: &lt;не записан !&gt; Администратор</div>
<div class="a" style="left:52px;top:841px;width:232px;height:1px;background:#2d3f91"></div>
<svg class="a" style="left:1260px;top:830px" width="13" height="10" viewBox="0 0 13 10"><rect x="0.5" y="0.5" width="12" height="9" fill="#fff" stroke="#8a8a8a" stroke-width="1"/><path d="M3 2.5 H10 M3 4.5 H10 M3 6.5 H10" stroke="#9a9a9a" stroke-width="0.8"/></svg>
<div class="a" style="left:1285.90px;top:827px;font-size:14px;line-height:16px;color:#74302a;letter-spacing:0.4px;transform:scaleX(0.9001);transform-origin:0 0;">Новый</div>
</body></html>
